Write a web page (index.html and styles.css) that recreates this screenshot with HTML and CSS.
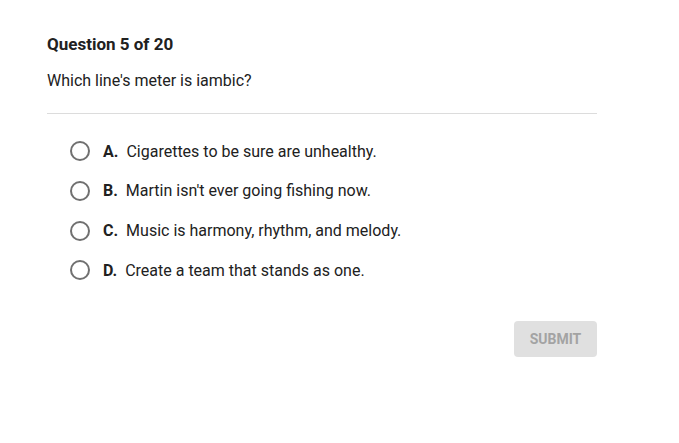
FILE: index.html
```html
<!DOCTYPE html>
<html>
<head>
<meta charset="utf-8">
<link rel="stylesheet" href="styles.css">
</head>
<body>
<div class="quiz">
  <h1 class="title">Question 5 of 20</h1>
  <p class="prompt">Which line's meter is iambic?</p>
  <div class="divider"></div>
  <ul class="options">
    <li class="option"><span class="radio"></span><span class="letter">A.</span><span class="text">Cigarettes to be sure are unhealthy.</span></li>
    <li class="option"><span class="radio"></span><span class="letter">B.</span><span class="text">Martin isn't ever going fishing now.</span></li>
    <li class="option"><span class="radio"></span><span class="letter">C.</span><span class="text">Music is harmony, rhythm, and melody.</span></li>
    <li class="option"><span class="radio"></span><span class="letter">D.</span><span class="text">Create a team that stands as one.</span></li>
  </ul>
  <div class="actions"><button class="submit">SUBMIT</button></div>
</div>
</body>
</html>
```
FILE: styles.css
```css
html, body { margin: 0; padding: 0; background: #fff; }
body { font-family: Roboto, "Noto Sans", sans-serif; color: #212121; }
.quiz { width: 550px; padding: 34px 0 0 47px; }
.title { margin: 0; font-size: 17px; font-weight: 700; line-height: 20px; color: #212121; }
.prompt { margin: 17px 0 0; font-size: 16px; line-height: 20px; color: #212121; }
.divider { height: 1px; background: #dcdcdc; margin-top: 22px; }
.options { list-style: none; margin: 27px 0 0; padding: 0 0 0 23px; }
.option { display: flex; align-items: center; height: 20px; margin-bottom: 19.8px; font-size: 16px; }
.radio { width: 16px; height: 16px; border: 2px solid #707070; border-radius: 50%; flex: none; }
.letter { font-weight: 700; margin-left: 13px; margin-right: 8px; }
.actions { display: flex; justify-content: flex-end; margin-top: 41px; }
.submit { width: 83px; height: 36px; border: none; border-radius: 4px; background: #e0e0e0; color: #a3a3a3; font-family: Roboto, sans-serif; font-weight: 700; font-size: 14px; padding: 0; }
```
